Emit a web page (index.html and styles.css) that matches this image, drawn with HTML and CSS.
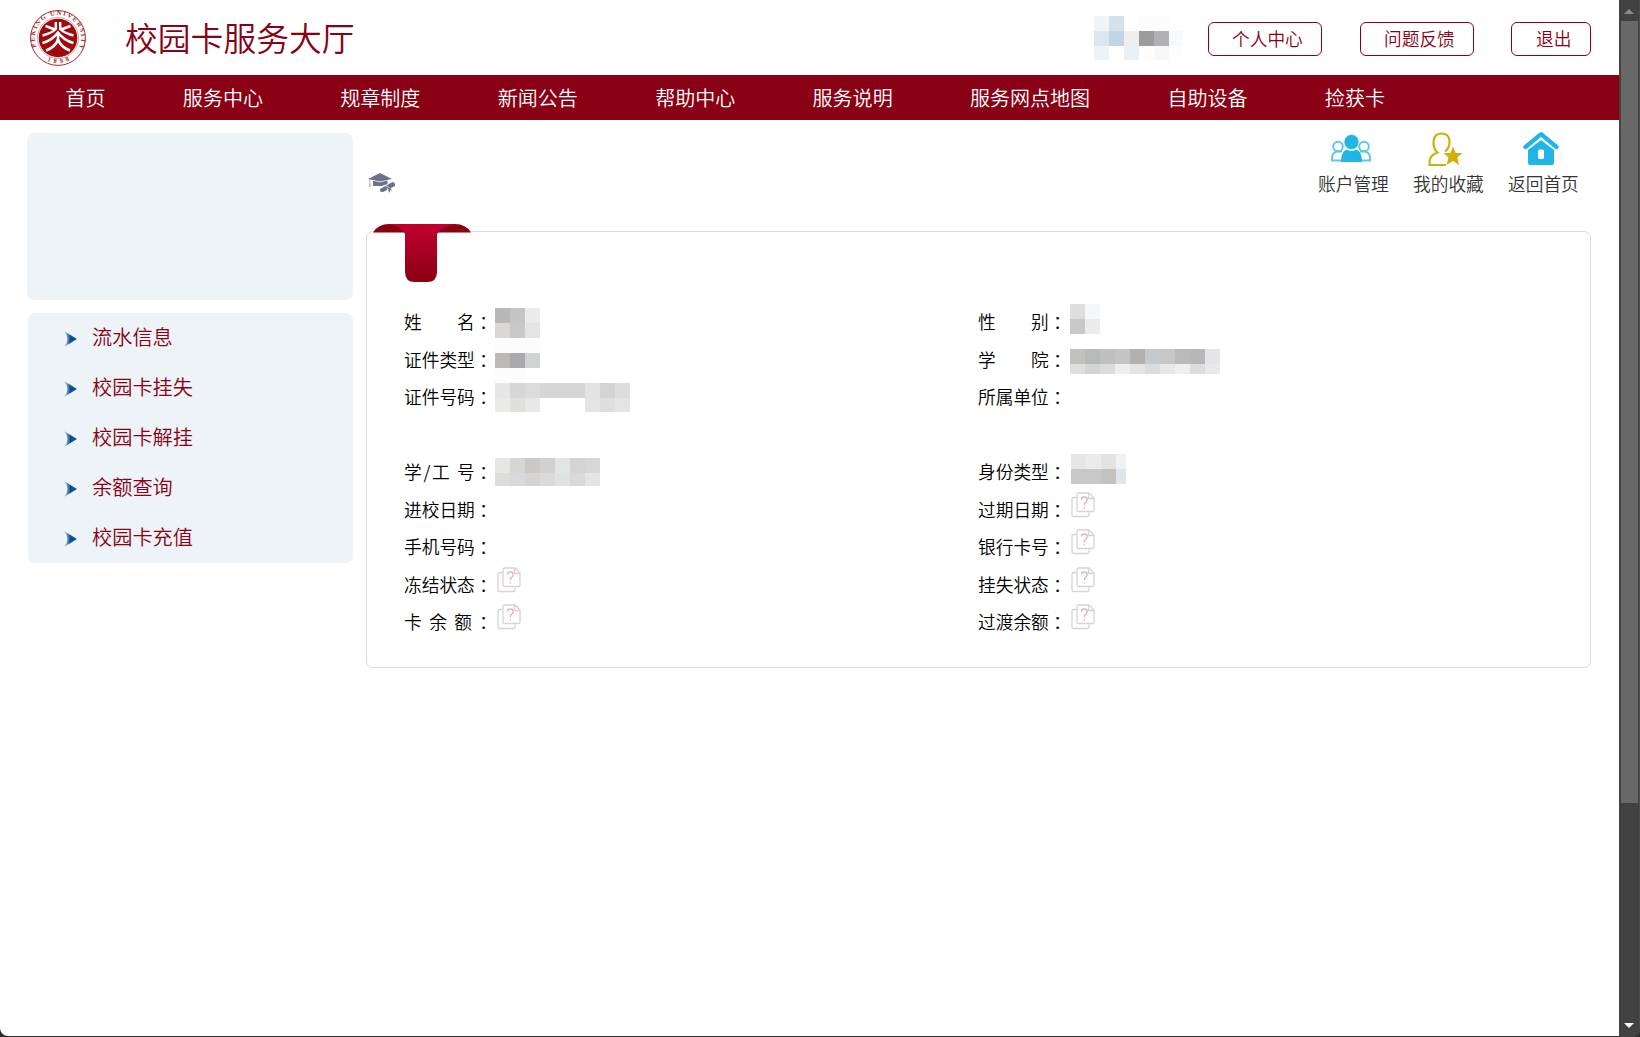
FILE: index.html
```html
<!DOCTYPE html>
<html lang="zh-CN">
<head>
<meta charset="utf-8">
<title>校园卡服务大厅</title>
<link rel="stylesheet" href="styles.css">
</head>
<body>
<svg width="0" height="0" class="defs" aria-hidden="true">
  <symbol id="doc" viewBox="0 0 24 26">
    <path d="M5.5 5.500H2.500Q1 5.500 1 7V23Q1 24.500 2.500 24.500H16.500Q18 24.500 18 23V20.500" fill="none" stroke="#d4d4d4" stroke-width="1.300"/>
    <path d="M7.500 1H18L23 6V18Q23 19.500 21.500 19.500H7.500Q6 19.500 6 18V2.500Q6 1 7.500 1ZM17.500 1V6.500H23" fill="#fff" stroke="#d4d4d4" stroke-width="1.300"/>
    <path d="M10.500 7.500Q10.500 4.800 13.300 4.800Q16.200 4.800 16.200 7.500Q16.200 9.300 14.500 10.500Q13.300 11.400 13.300 13.200M13.300 15V16.500" fill="none" stroke="#e8a9ab" stroke-width="1.200"/>
  </symbol>
  <symbol id="arrow" viewBox="0 0 13 16">
    <path d="M0 0L13 8L0 16Q7 8 0 0Z" fill="url(#arrowFill)"/>
  </symbol>
  <linearGradient id="arrowFill"><stop offset="0" stop-color="#c9d8e4"/><stop offset=".5" stop-color="#0b4f90"/><stop offset="1" stop-color="#0b559b"/></linearGradient>
</svg>

<div class="page">
  <header class="header">
    <svg class="logo" width="56" height="56" viewBox="0 0 56 56">
      <defs>
        <path id="ringTop" d="M6.900 37.700A23.200 23.200 0 1 1 49.100 37.700"/>
        <path id="ringBottom" d="M14.500 49.300A25.300 25.300 0 0 0 41.500 49.300"/>
      </defs>
      <circle cx="28" cy="28" r="27.400" fill="#fff" stroke="#a5282d" stroke-width="1"/>
      <circle cx="28" cy="28" r="20.500" fill="none" stroke="#c06a6d" stroke-width=".6"/>
      <circle cx="28" cy="28" r="19.300" fill="#a00a0f"/>
      <text class="logo-text"><textPath href="#ringTop" startOffset="1" textLength="92">PEKING UNIVERSITY</textPath></text>
      <text class="logo-text"><textPath href="#ringBottom" startOffset="3" textLength="23">1898</textPath></text>
      <g fill="none" stroke="#fff" stroke-width="2.500">
        <path d="M25.800 12V19Q22 23 12.500 25.500M30.200 12V19Q34 23 43.500 25.500"/>
        <path d="M15.500 16L25 19.500M40.500 16L31 19.500"/>
        <path d="M12.500 33Q22 30.500 28 22.500Q34 30.500 43.500 33M28 22.500V30"/>
        <path d="M16 40.500Q25.500 37 28 29.500Q30.500 37 40 40.500"/>
      </g>
    </svg>
    <h1 class="title">校园卡服务大厅</h1>
    <svg class="user" width="88" height="44" shape-rendering="crispEdges">
      <path fill="#f1f5f8" d="M0 0h15v15H0z"/><path fill="#d5e2eb" d="M15 0h15v15H15z"/><path fill="#fcfcfc" d="M45 0h30v15H45z"/>
      <path fill="#dce6ee" d="M0 15h15v15H0z"/><path fill="#c3d4e4" d="M15 15h15v15H15z"/><path fill="#f0efed" d="M30 15h15v15H30z"/><path fill="#9b9c9e" d="M45 15h15v15H45z"/><path fill="#b1b1b3" d="M60 15h15v15H60z"/><path fill="#f8f9fb" d="M75 15h13v15H75z"/>
      <path fill="#eef3f7" d="M0 30h15v14H0z"/><path fill="#eaf1f6" d="M30 30h15v14H30z"/><path fill="#fdfdfd" d="M45 30h15v14H45z"/><path fill="#f8f8f6" d="M60 30h15v14H60z"/><path fill="#fdfdfd" d="M75 30h13v14H75z"/>
    </svg>
    <div class="actions">
      <a class="btn">个人中心</a><a class="btn">问题反馈</a><a class="btn short">退出</a>
    </div>
  </header>
  <nav class="nav">
    <a>首页</a><a>服务中心</a><a>规章制度</a><a>新闻公告</a><a>帮助中心</a><a>服务说明</a><a>服务网点地图</a><a>自助设备</a><a>捡获卡</a>
  </nav>
  <div class="body">
    <aside class="side">
      <div class="box profile"></div>
      <ul class="box menu">
        <li><svg width="13" height="16"><use href="#arrow"/></svg>流水信息</li>
        <li><svg width="13" height="16"><use href="#arrow"/></svg>校园卡挂失</li>
        <li><svg width="13" height="16"><use href="#arrow"/></svg>校园卡解挂</li>
        <li><svg width="13" height="16"><use href="#arrow"/></svg>余额查询</li>
        <li><svg width="13" height="16"><use href="#arrow"/></svg>校园卡充值</li>
      </ul>
    </aside>
    <main class="main">
      <div class="toolbar">
        <svg class="cap" width="28" height="20" viewBox="0 0 28 20" fill="#6c7289">
          <path d="M0 6L12 0L24 6L12 8.500Z"/>
          <path d="M5 7.800L12 9.200L19.500 7.600V11L14 13H5Z"/>
          <path d="M1.500 6V10L.8 13.500H3L2.300 10V6Z" opacity=".6"/>
          <path d="M12 16L24.500 9Q27.500 9.500 27 13L15 19Q11.500 19.500 12 16Z"/>
          <path d="M17.500 12.500L22.500 15.500M19 15L20.500 19.500M21 14L23 18" stroke="#fff" stroke-width=".7" fill="none"/>
          <path d="M20 15L21 20L22.500 17L24 18L22 14Z"/>
        </svg>
        <div class="quick">
          <a><svg width="42" height="38" viewBox="0 0 42 38">
            <g fill="none" stroke="#58c8e9" stroke-width="1.900"><circle cx="8" cy="15.500" r="4.800"/><circle cx="34" cy="15.500" r="4.800"/><path d="M13 29.500H2V27Q2 21.500 7 20.500H12M29 29.500H40V27Q40 21.500 35 20.500H30"/></g>
            <circle cx="21.500" cy="11" r="7.500" fill="#20b5e5" stroke="#fff" stroke-width=".6"/><path d="M11 31Q11 20 17 18.500Q21.500 21.500 26 18.500Q32 20 32 31Z" fill="#20b5e5"/>
          </svg><span>账户管理</span></a>
          <a><svg width="42" height="38" viewBox="0 0 42 38">
            <g fill="none" stroke="#d2ae08" stroke-width="2.200"><path d="M21 34H4.500Q3.500 24.500 12.500 21.500Q8.500 18 8.500 11.500Q8.500 2.500 16.500 2.500Q24.500 2.500 24.500 11Q24.500 17 20 20.500"/></g>
            <path d="M28 15.500L30.700 22H37.500L32.300 26.500L34 34L28 30L21.500 34L23.500 26.500L18.500 22H25.500Z" fill="#d2ae08"/>
          </svg><span>我的收藏</span></a>
          <a><svg width="42" height="38" viewBox="0 0 42 38">
            <path d="M5.500 16L21 3.200L36.500 16" fill="none" stroke="#20b5e5" stroke-width="4.300" stroke-linecap="round" stroke-linejoin="round"/>
            <path fill-rule="evenodd" d="M8 19L21 9L34 19V32Q34 34 32 34H10Q8 34 8 32ZM19.500 18.500Q18 18.500 18 20.500V26.500Q18 28 19.500 28H22.500Q24 28 24 26.500V20.500Q24 18.500 22.500 18.500Z" fill="#20b5e5"/>
          </svg><span>返回首页</span></a>
        </div>
      </div>
      <section class="panel">
        <svg class="ribbon" width="98" height="58" viewBox="0 0 98 58">
          <defs><linearGradient id="red" x2="0" y2="1"><stop offset="0" stop-color="#c20030"/><stop offset="1" stop-color="#8a0014"/></linearGradient></defs>
          <path d="M0 8.500Q5 0 16 0H82Q93 0 98 8.500Z" fill="#8a0014"/>
          <path d="M14 0H84Q70 1 64 10V48Q64 58 54 58H42Q32 58 32 48V10Q28 1 14 0Z" fill="url(#red)"/>
        </svg>
        <div class="col">
          <div class="row"><span class="label">姓 名</span><i>：</i>
            <svg class="m4" width="45" height="45" shape-rendering="crispEdges"><path fill="#bab8b6" d="M0 0h15v15H0z"/><path fill="#c4c5c7" d="M15 0h15v15H15z"/><path fill="#ebebeb" d="M30 0h15v15H30z"/><path fill="#d9d8d7" d="M0 15h15v15H0z"/><path fill="#c8c8c8" d="M15 15h15v15H15z"/><path fill="#e2e4e6" d="M30 15h15v15H30z"/><path fill="#fcfcfc" d="M0 30h45v15H0z"/></svg></div>
          <div class="row"><span class="label">证件类型</span><i>：</i>
            <svg class="m11" width="45" height="30" shape-rendering="crispEdges"><path fill="#bbb9b7" d="M0 0h15v15H0z"/><path fill="#a9aaac" d="M15 0h15v15H15z"/><path fill="#d1d2d2" d="M30 0h15v15H30z"/><path fill="#fcfcfc" d="M0 15h30v15H0z"/></svg></div>
          <div class="row"><span class="label">证件号码</span><i>：</i>
            <svg class="m4" width="135" height="29" shape-rendering="crispEdges"><path fill="#e6e6e6" d="M0 0h15v15H0z"/><path fill="#d6d6d6" d="M15 0h75v15H15z"/><path fill="#dcdcdc" d="M30 0h15v15H30z"/><path fill="#e3e3e1" d="M90 0h15v15H90z"/><path fill="#d3d4d4" d="M105 0h15v15h-15z"/><path fill="#dddddb" d="M120 0h15v15h-15z"/><path fill="#ebeae8" d="M0 15h15v14H0z"/><path fill="#dfdfdc" d="M15 15h15v14H15z"/><path fill="#e7e8ea" d="M30 15h15v14H30z"/><path fill="#e4e4e4" d="M90 15h45v14H90z"/><path fill="#dedede" d="M105 15h15v14h-15z"/></svg></div>
          <div class="row"></div>
          <div class="row"><span class="label">学/工 号</span><i>：</i>
            <svg class="m4" width="105" height="28" shape-rendering="crispEdges"><path fill="#e6e6e4" d="M0 0h15v15H0z"/><path fill="#d6d6d5" d="M15 0h15v15H15z"/><path fill="#cac9c8" d="M30 0h15v15H30z"/><path fill="#d1d1d1" d="M45 0h15v15H45z"/><path fill="#e1e5e5" d="M60 0h15v15H60z"/><path fill="#d5d4d2" d="M75 0h15v15H75z"/><path fill="#d7d7d9" d="M90 0h15v15H90z"/><path fill="#dddcdb" d="M0 15h15v13H0z"/><path fill="#d7d9dc" d="M15 15h15v13H15z"/><path fill="#d5d4d3" d="M30 15h15v13H30z"/><path fill="#dadada" d="M45 15h15v13H45z"/><path fill="#dfe2e0" d="M60 15h15v13H60z"/><path fill="#d8d9dc" d="M75 15h15v13H75z"/><path fill="#e4e4e4" d="M90 15h15v13H90z"/></svg></div>
          <div class="row"><span class="label">进校日期</span><i>：</i></div>
          <div class="row"><span class="label">手机号码</span><i>：</i></div>
          <div class="row"><span class="label">冻结状态</span><i>：</i><svg class="doc" width="24" height="26"><use href="#doc"/></svg></div>
          <div class="row"><span class="label narrow">卡 余 额</span><i>：</i><svg class="doc" width="24" height="26"><use href="#doc"/></svg></div>
        </div>
        <div class="col second">
          <div class="row"><span class="label">性 别</span><i>：</i>
            <svg width="30" height="30" shape-rendering="crispEdges"><path fill="#dedede" d="M0 0h15v15H0z"/><path fill="#f6f7f9" d="M15 0h15v15H15z"/><path fill="#c9c7c8" d="M0 15h15v15H0z"/><path fill="#ebecee" d="M15 15h15v15H15z"/></svg></div>
          <div class="row"><span class="label">学 院</span><i>：</i>
            <svg class="m7" width="150" height="25" shape-rendering="crispEdges"><path fill="#c2c1bf" d="M0 0h15v15H0z"/><path fill="#b8b9b9" d="M15 0h15v15H15z"/><path fill="#bec1c0" d="M30 0h15v15H30z"/><path fill="#c4c4c4" d="M45 0h15v15H45z"/><path fill="#b3b1af" d="M60 0h15v15H60z"/><path fill="#c5c9cc" d="M75 0h15v15H75z"/><path fill="#c7c7c7" d="M90 0h15v15H90z"/><path fill="#bbbab8" d="M105 0h15v15h-15z"/><path fill="#b7b7b7" d="M120 0h15v15h-15z"/><path fill="#e4e5e8" d="M135 0h15v15h-15z"/><path fill="#dededd" d="M0 15h15v10H0z"/><path fill="#d4d4d4" d="M15 15h15v10H15z"/><path fill="#dcdcdc" d="M30 15h15v10H30z"/><path fill="#eee" d="M45 15h15v10H45z"/><path fill="#e5e5e5" d="M60 15h15v10H60z"/><path fill="#dbdddc" d="M75 15h15v10H75z"/><path fill="#e7e7e7" d="M90 15h15v10H90z"/><path fill="#eeeff1" d="M105 15h15v10h-15z"/><path fill="#ddd" d="M120 15h15v10h-15z"/><path fill="#e9e9e9" d="M135 15h15v10h-15z"/></svg></div>
          <div class="row"><span class="label">所属单位</span><i>：</i></div>
          <div class="row"></div>
          <div class="row"><span class="label">身份类型</span><i>：</i>
            <svg class="identity" width="55" height="30" shape-rendering="crispEdges"><path fill="#e6e6e5" d="M0 0h15v15H0z"/><path fill="#ebebeb" d="M15 0h15v15H15z"/><path fill="#e4e3e2" d="M30 0h15v15H30z"/><path fill="#eef2f5" d="M45 0h10v15H45z"/><path fill="#c8c8c8" d="M0 15h30v15H0z"/><path fill="#c5c1be" d="M30 15h15v15H30z"/><path fill="#e0e5e9" d="M45 15h10v15H45z"/></svg></div>
          <div class="row"><span class="label">过期日期</span><i>：</i><svg class="doc" width="24" height="26"><use href="#doc"/></svg></div>
          <div class="row"><span class="label">银行卡号</span><i>：</i><svg class="doc" width="24" height="26"><use href="#doc"/></svg></div>
          <div class="row"><span class="label">挂失状态</span><i>：</i><svg class="doc" width="24" height="26"><use href="#doc"/></svg></div>
          <div class="row"><span class="label">过渡余额</span><i>：</i><svg class="doc" width="24" height="26"><use href="#doc"/></svg></div>
        </div>
      </section>
    </main>
  </div>
</div>
<div class="scrollbar"><span class="up"></span><span class="thumb"></span><span class="down"></span></div>
</body>
</html>
```
FILE: styles.css
```css
* { box-sizing: border-box; }
body {
  margin: 0;
  height: 1037px;
  display: flex;
  overflow: hidden;
  background: #2b2b2b;
  font-family: "Noto Sans CJK SC DemiLight", "Noto Sans CJK SC", sans-serif;
  font-weight: 350;
  font-size: 17.7px;
  color: #000;
}
svg { display: block; flex: none; }
.defs { position: absolute; }
.page {
  width: 1619px;
  height: 1036px;
  background: #fff;
  border-bottom-left-radius: 8px;
}

.header { display: flex; height: 75px; padding-left: 30px; }
.logo { margin-top: 10px; overflow: visible; }
.logo-text { font: 700 6.5px "Liberation Serif", serif; fill: #a5282d; }
.title {
  margin: 0 0 0 39px;
  width: 969px;
  font-size: 32.8px;
  font-weight: 350;
  line-height: 74px;
  color: #8a0014;
}
.user { margin-top: 16px; }
.actions { display: flex; gap: 38px; margin: 22px 0 0 26px; }
.btn {
  width: 114px;
  height: 34px;
  padding-left: 23px;
  border: 1px solid #8a0014;
  border-radius: 6px;
  line-height: 30px;
  color: #8a0014;
  white-space: nowrap;
}
.short { width: 80px; margin-left: -1px; padding-left: 24px; }

.nav {
  display: flex;
  gap: 77.3px;
  height: 45px;
  padding-left: 65.5px;
  background: #8a0014;
  color: #fff;
  font-size: 20.05px;
  line-height: 45px;
}

.body { display: flex; gap: 13px; padding: 13px 28px 0 27px; }
.side { width: 326px; display: flex; flex-direction: column; gap: 13px; }
.box { background: #edf3f7; border-radius: 7px; margin: 0; }
.profile { height: 167px; }
.menu { list-style: none; height: 250px; padding: 0 0 0 36px; margin-left: 1px; }
.menu li {
  display: flex;
  align-items: center;
  gap: 15px;
  height: 50px;
  padding-bottom: 3px;
  font-size: 20.2px;
  color: #8a0014;
}
.menu svg { margin-top: 5px; }

.main { width: 1225px; }
.toolbar { display: flex; justify-content: space-between; height: 98px; padding-right: 13px; }
.cap { margin: 40px 0 0 2px; }
.quick { display: flex; gap: 25px; margin-top: -2px; }
.quick a { width: 70px; color: #333; line-height: 26px; }
.quick svg { margin: 0 auto; transform: translateX(-2px); }
.quick span { display: block; margin-top: 1px; white-space: nowrap; }

.panel {
  position: relative;
  display: flex;
  height: 437px;
  padding: 72px 0 0 37px;
  border: 1px solid #d9dbdc;
  border-radius: 7px;
}
.ribbon { position: absolute; left: 6px; top: -8px; }
.col { width: 574px; }
.row { display: flex; height: 37.5px; line-height: 35.5px; }
.label { width: 70.8px; text-align-last: justify; white-space: nowrap; }
.narrow { width: 68px; margin-right: 2.8px; }
.row i { width: 20.2px; line-height: 37.5px; font-style: normal; font-family: "Noto Sans CJK TC DemiLight", "Noto Sans CJK TC", sans-serif; }
.second i { width: 21.2px; }
.m4 { margin-top: 4px; }
.m7 { margin-top: 7px; }
.m11 { margin-top: 11px; }
.doc { margin-left: 2.5px; }
.second .doc { margin-left: 1.5px; }
.identity { margin-left: 1px; }

.scrollbar {
  display: flex;
  flex-direction: column;
  align-items: center;
  width: 21px;
  height: 1037px;
  background: #424242;
  border-right: 1px solid #4d4d4d;
  border-bottom-right-radius: 8px;
}
.up { margin-top: 9px; border: 5px solid transparent; border-top: 0; border-bottom-color: #8b8b8b; }
.thumb { width: 17px; height: 782px; margin-top: 7px; background: #686868; }
.down { margin-top: 220px; border: 5px solid transparent; border-bottom: 0; border-top-color: #fff; }
```
